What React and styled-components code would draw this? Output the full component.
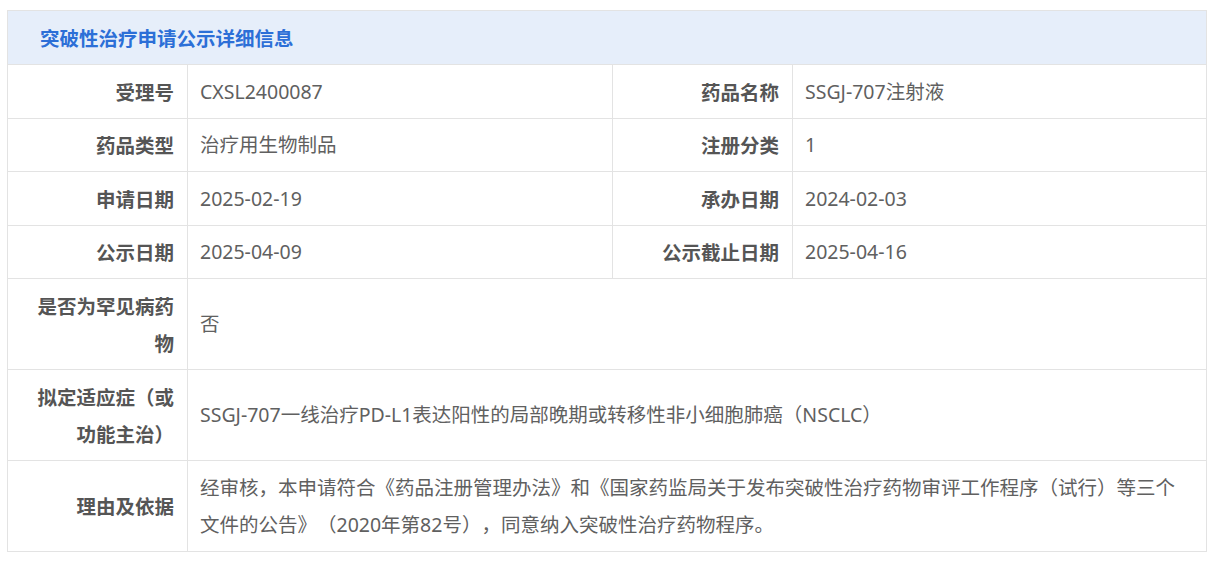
import React from "react";
import styled, { createGlobalStyle } from "styled-components";

const Global = createGlobalStyle`
  html, body { margin: 0; padding: 0; background: #ffffff; }
  body {
    font-family: "Noto Sans", "Noto Sans CJK SC", sans-serif;
    text-spacing-trim: space-all;
  }
`;

const Page = styled.div`
  padding: 10px 17px 14px 7px;
`;

const Panel = styled.div`
  width: 1200px;
  box-sizing: border-box;
  border: 1px solid #e3e3e3;
  font-size: 19.5px;
`;

const Header = styled.div`
  height: 53px;
  background: #e6eefa;
  border-bottom: 1px solid #e3e3e3;
  display: flex;
  align-items: center;
  padding-left: 32px;
  color: #2c6fd7;
  font-weight: 700;
  font-size: 19.5px;
  font-family: "Noto Sans CJK SC", sans-serif;
`;

const Grid = styled.div`
  display: grid;
  grid-template-columns: 180px 425px 180px 1fr;
`;

const Label = styled.div`
  box-sizing: border-box;
  padding: 7.5px 13px 7.5px 20px;
  text-align: right;
  font-weight: 700;
  color: #555555;
  line-height: 37.5px;
  border-right: 1px solid #e3e3e3;
  border-top: ${(p) => (p.$first ? "none" : "1px solid #e3e3e3")};
  display: flex;
  align-items: center;
  justify-content: flex-end;
  font-family: "Noto Sans CJK SC", sans-serif;
  text-spacing-trim: space-all;
`;

const Value = styled.div`
  box-sizing: border-box;
  padding: 7.5px 20px 7.5px 12px;
  color: #606060;
  line-height: 37.5px;
  border-top: ${(p) => (p.$first ? "none" : "1px solid #e3e3e3")};
  border-right: ${(p) => (p.$mid ? "1px solid #e3e3e3" : "none")};
  grid-column: ${(p) => (p.$wide ? "span 3" : "auto")};
  display: flex;
  align-items: center;
  text-spacing-trim: space-all;
`;

const pairs = [
  [["受理号", "CXSL2400087"], ["药品名称", "SSGJ-707注射液"]],
  [["药品类型", "治疗用生物制品"], ["注册分类", "1"]],
  [["申请日期", "2025-02-19"], ["承办日期", "2024-02-03"]],
  [["公示日期", "2025-04-09"], ["公示截止日期", "2025-04-16"]],
];

const wide = [
  ["是否为罕见病药物", "否"],
  ["拟定适应症（或功能主治）", "SSGJ-707一线治疗PD-L1表达阳性的局部晚期或转移性非小细胞肺癌（NSCLC）"],
  [
    "理由及依据",
    "经审核，本申请符合《药品注册管理办法》和《国家药监局关于发布突破性治疗药物审评工作程序（试行）等三个文件的公告》（2020年第82号），同意纳入突破性治疗药物程序。",
  ],
];

export default function App() {
  return (
    <>
      <Global />
      <Page>
        <Panel>
          <Header>突破性治疗申请公示详细信息</Header>
          <Grid>
            {pairs.map((row, i) => (
              <React.Fragment key={i}>
                <Label $first={i === 0}>{row[0][0]}</Label>
                <Value $first={i === 0} $mid>{row[0][1]}</Value>
                <Label $first={i === 0}>{row[1][0]}</Label>
                <Value $first={i === 0}>{row[1][1]}</Value>
              </React.Fragment>
            ))}
            {wide.map(([l, v], i) => (
              <React.Fragment key={"w" + i}>
                <Label>{l}</Label>
                <Value $wide>{v}</Value>
              </React.Fragment>
            ))}
          </Grid>
        </Panel>
      </Page>
    </>
  );
}
